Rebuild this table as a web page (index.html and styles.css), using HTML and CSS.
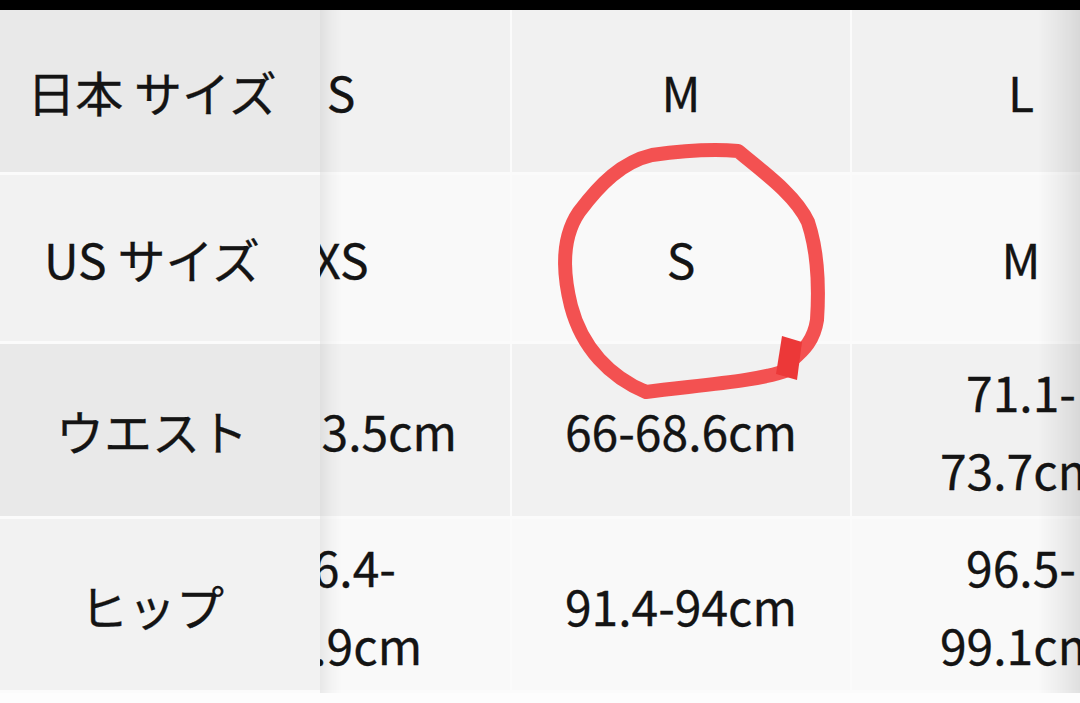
FILE: index.html
```html
<!DOCTYPE html>
<html lang="ja">
<head>
<meta charset="utf-8">
<title>サイズ表</title>
<link rel="stylesheet" href="styles.css">
</head>
<body>
<div class="topbar"></div>
<div class="viewport">
  <table class="size-table">
    <colgroup>
      <col class="col-label">
      <col class="col-size">
      <col class="col-size">
      <col class="col-size">
      <col class="col-size">
    </colgroup>
    <tr class="row row-a r1">
      <th>日本 サイズ</th><td>S</td><td>M</td><td>L</td><td>LL</td>
    </tr>
    <tr class="row row-b r2">
      <th>US サイズ</th><td>XS</td><td>S</td><td>M</td><td>L</td>
    </tr>
    <tr class="row row-a r3">
      <th>ウエスト</th><td>61-63.5cm</td><td>66-68.6cm</td><td>71.1-73.7cm</td><td>76.2-78.7cm</td>
    </tr>
    <tr class="row row-b r4">
      <th>ヒップ</th><td>86.4-88.9cm</td><td>91.4-94cm</td><td>96.5-99.1cm</td><td>101.6-104.1cm</td>
    </tr>
  </table>
  <div class="edge-shade"></div>
  <svg class="mark" viewBox="0 0 1080 693" aria-hidden="true">
    <path class="mark-stroke" d="M788 370 C760 381 700 385 646 392 C610 377 582 348 571 306 C561 266 564 234 579 212 C600 184 622 162 652 155 C688 150 714 149 738 151 C766 174 796 196 808 222 C818 252 819 290 817 320 C814 340 804 350 792 360"/>
    <path class="mark-blob" d="M782 336 L802 342 L797 380 L776 374 Z"/>
  </svg>
</div>
</body>
</html>
```

FILE: styles.css
```css
html, body {
  margin: 0;
  padding: 0;
}

body {
  background: #fdfdfd;
  font-family: "Noto Sans CJK JP", "Noto Sans", sans-serif;
  color: #141414;
  width: 1080px;
  height: 703px;
  overflow: hidden;
}

.topbar {
  height: 10px;
  background: #000;
}

.viewport {
  position: relative;
  width: 1080px;
  height: 683px;
  overflow: hidden;
}

.size-table {
  table-layout: fixed;
  border-collapse: separate;
  border-spacing: 0;
  width: 1680px;
  margin-left: -148px;
  font-size: 48px;
  line-height: 78px;
}

.col-label { width: 320px; }
.col-size { width: 340px; }

.size-table th,
.size-table td {
  font-weight: 400;
  text-align: center;
  vertical-align: middle;
  border-bottom: 3px solid #fbfbfb;
  padding: 0;
  -webkit-text-stroke: 0.3px #141414;
}

.size-table td {
  padding: 0 40px;
  border-right: 2px solid #fbfbfb;
}

.size-table th {
  position: sticky;
  left: 0;
  z-index: 2;
  padding: 0 16px 0 0;
  white-space: nowrap;
}

.size-table th::after {
  content: "";
  position: absolute;
  top: 0;
  bottom: -3px;
  right: -22px;
  width: 22px;
  background: linear-gradient(to right, rgba(0,0,0,0.07), rgba(0,0,0,0.025) 50%, rgba(0,0,0,0));
  pointer-events: none;
}

.row-a th { background: #e9e9e9; }
.row-a td { background: #f1f1f1; }
.row-b th { background: #f2f2f2; }
.row-b td { background: #f9f9f9; }

.r1 { height: 165px; }
.r2 { height: 169px; }
.r3 { height: 175px; }
.r4 { height: 174px; }

.edge-shade {
  position: absolute;
  top: 0;
  right: 0;
  width: 42px;
  height: 683px;
  background: linear-gradient(to right, rgba(0,0,0,0), rgba(0,0,0,0.05) 55%, rgba(0,0,0,0.1));
  pointer-events: none;
  z-index: 3;
}

.mark {
  position: absolute;
  left: 0;
  top: -10px;
  width: 1080px;
  height: 693px;
  pointer-events: none;
  z-index: 4;
}

.mark-stroke {
  fill: none;
  stroke: #f24848;
  stroke-width: 14;
  stroke-linecap: round;
  stroke-linejoin: round;
  opacity: 0.95;
}

.mark-blob {
  fill: #ec3838;
}
```
